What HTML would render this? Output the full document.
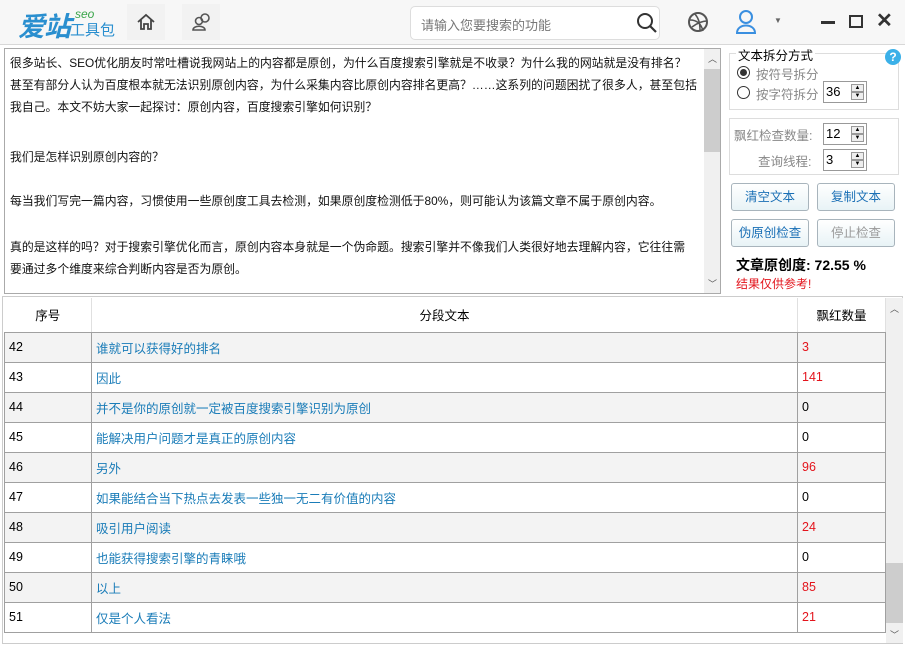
<!DOCTYPE html><html><head><meta charset="utf-8"><style>
*{margin:0;padding:0;box-sizing:border-box}
body{width:905px;height:647px;background:#fff;font-family:"Liberation Sans","Noto Sans CJK SC",sans-serif;font-size:12px;color:#000;position:relative;overflow:hidden}
.top{position:absolute;left:0;top:0;width:905px;height:45px;background:#f7f7f7;border-bottom:1px solid #d8d8d8}
.abs{position:absolute}
.ta{position:absolute;left:4px;top:48px;width:717px;height:246px;border:1px solid #aaa;background:#fff;overflow:hidden}
.ta p{position:absolute;left:5px;white-space:nowrap;font-size:11.85px;line-height:22px;color:#111}
.sb{position:absolute;right:0;top:0;width:16px;height:100%;background:#f0f0f0}
.btn{position:absolute;width:78px;height:28px;border:1px solid #a8b4bc;border-radius:3px;background:linear-gradient(#fff,#e8f3f6);color:#1a6fb5;font-size:12.5px;text-align:center;line-height:26px}
.spin{position:absolute;width:44px;height:22px;border:1px solid #999;background:#fff;font-size:13px;padding-left:2px;line-height:20px}
.spin i{position:absolute;right:2px;width:13px;height:8px;border:1px solid #999;background:#eee;font-style:normal;font-size:6px;line-height:7px;text-align:center}
table{position:absolute;left:4px;top:298px;border-collapse:collapse;width:882px;font-size:12.5px}
td{border:1px solid #a0a0a0;height:30px;padding-left:4px}
tr.g td{background:#f3f3f3}
td.t{color:#1a7cb8}
td.r{color:#e3141c}
th{font-weight:normal;height:34px;border-right:1px solid #e0e0e0;border-bottom:1px solid #a0a0a0}
</style></head><body>
<div class="top"></div>
<div class="abs" style="left:18px;top:5px;font-size:27px;color:#2a8fcf;font-style:italic;font-weight:bold;letter-spacing:-1px">爱站</div>
<div class="abs" style="left:75px;top:7px;font-size:12px;color:#3aa54a;font-style:italic">seo</div>
<div class="abs" style="left:70px;top:19px;font-size:15px;color:#2a8fcf">工具包</div>
<div class="abs" style="left:127px;top:4px;width:38px;height:36px;background:#f2f2f2"></div>
<svg class="abs" style="left:136px;top:12px" width="20" height="20" viewBox="0 0 20 20"><path d="M2 10 L10 3 L18 10 M5 8 V17 H8 V12 H12 V17 H15 V8" fill="none" stroke="#444" stroke-width="1.8"/></svg>
<div class="abs" style="left:182px;top:4px;width:38px;height:36px;background:#f2f2f2"></div>
<svg class="abs" style="left:191px;top:12px" width="22" height="20" viewBox="0 0 22 20"><circle cx="14" cy="6" r="4" fill="none" stroke="#555" stroke-width="1.6"/><circle cx="8" cy="9" r="3.5" fill="none" stroke="#555" stroke-width="1.6"/><path d="M2 18 C2 13 14 13 14 18 Z" fill="none" stroke="#555" stroke-width="1.6"/></svg>
<div class="abs" style="left:410px;top:6px;width:250px;height:34px;border:1px solid #ddd;border-radius:5px;background:#fff"></div>
<div class="abs" style="left:421px;top:15px;font-size:13px;color:#777">请输入您要搜索的功能</div>
<svg class="abs" style="left:636px;top:12px" width="22" height="22" viewBox="0 0 22 22"><circle cx="9" cy="9" r="7" fill="none" stroke="#333" stroke-width="2"/><path d="M14 14 L20 20" stroke="#333" stroke-width="2.2"/></svg>
<svg class="abs" style="left:687px;top:11px" width="24" height="24" viewBox="0 0 24 24"><circle cx="11" cy="11" r="9" fill="none" stroke="#555" stroke-width="2"/><path d="M3 9 C9 9 14 12 16 20 M8 3 C12 8 13 12 13 20 M5 16 C10 12 16 10 20 10" fill="none" stroke="#555" stroke-width="1.5"/></svg>
<svg class="abs" style="left:735px;top:9px" width="22" height="26" viewBox="0 0 22 26"><circle cx="11" cy="8" r="6" fill="none" stroke="#3a8fe0" stroke-width="2"/><path d="M2 24 C2 14 20 14 20 24 Z" fill="none" stroke="#3a8fe0" stroke-width="2"/></svg>
<div class="abs" style="left:774px;top:16px;font-size:8px;color:#666">▼</div>
<div class="abs" style="left:821px;top:21px;width:14px;height:3px;background:#333"></div>
<div class="abs" style="left:849px;top:15px;width:14px;height:13px;border:2.5px solid #333"></div>
<div class="abs" style="left:876px;top:8px;font-size:20px;font-weight:bold;color:#333">✕</div>

<div class="ta">
<p style="top:3px">很多站长、SEO优化朋友时常吐槽说我网站上的内容都是原创，为什么百度搜索引擎就是不收录？为什么我的网站就是没有排名？<br>甚至有部分人认为百度根本就无法识别原创内容，为什么采集内容比原创内容排名更高？……这系列的问题困扰了很多人，甚至包括<br>我自己。本文不妨大家一起探讨：原创内容，百度搜索引擎如何识别？</p>
<p style="top:97px">我们是怎样识别原创内容的？</p>
<p style="top:141px">每当我们写完一篇内容，习惯使用一些原创度工具去检测，如果原创度检测低于80%，则可能认为该篇文章不属于原创内容。</p>
<p style="top:187px">真的是这样的吗？对于搜索引擎优化而言，原创内容本身就是一个伪命题。搜索引擎并不像我们人类很好地去理解内容，它往往需<br>要通过多个维度来综合判断内容是否为原创。</p>
<div class="sb"><div style="position:absolute;top:20px;left:0;width:16px;height:83px;background:#cdcdcd"></div><div style="position:absolute;top:3px;left:4px;font-size:9px;color:#555">︿</div><div style="position:absolute;bottom:3px;left:4px;font-size:9px;color:#555">﹀</div></div>
</div>

<div class="abs" style="left:729px;top:53px;width:170px;height:57px;border:1px solid #ddd"></div>
<div class="abs" style="left:736px;top:45px;background:#fff;padding:0 2px;font-size:12.5px">文本拆分方式</div>
<div class="abs" style="left:885px;top:49px;width:16px;height:16px;border-radius:50%;background:#3bb0e8;color:#fff;font-weight:bold;font-size:12px;text-align:center;line-height:16px">?</div>
<div class="abs" style="left:737px;top:66px;width:13px;height:13px;border:1px solid #333;border-radius:50%"><div style="margin:2px;width:7px;height:7px;border-radius:50%;background:#333"></div></div>
<div class="abs" style="left:756px;top:64px;color:#888;font-size:12.5px">按符号拆分</div>
<div class="abs" style="left:737px;top:86px;width:13px;height:13px;border:1px solid #333;border-radius:50%"></div>
<div class="abs" style="left:756px;top:84px;color:#888;font-size:12.5px">按字符拆分</div>
<div class="spin" style="left:823px;top:81px">36<i style="top:2px">▲</i><i style="top:10px">▼</i></div>
<div class="abs" style="left:729px;top:118px;width:170px;height:57px;border:1px solid #ddd"></div>
<div class="abs" style="left:734px;top:125px;color:#888;font-size:12.5px">飘红检查数量:</div>
<div class="spin" style="left:823px;top:123px">12<i style="top:2px">▲</i><i style="top:10px">▼</i></div>
<div class="abs" style="left:758px;top:151px;color:#888;font-size:12.5px">查询线程:</div>
<div class="spin" style="left:823px;top:149px">3<i style="top:2px">▲</i><i style="top:10px">▼</i></div>
<div class="btn" style="left:731px;top:183px">清空文本</div>
<div class="btn" style="left:817px;top:183px">复制文本</div>
<div class="btn" style="left:731px;top:219px">伪原创检查</div>
<div class="btn" style="left:817px;top:219px;color:#999">停止检查</div>
<div class="abs" style="left:736px;top:255px;font-size:14px;font-weight:bold">文章原创度: 72.55 %</div>
<div class="abs" style="left:736px;top:275px;font-size:12px;color:#e3141c">结果仅供参考!</div>

<div class="abs" style="left:2px;top:296px;width:901px;height:348px;border:1px solid #ccc"></div>
<table>
<tr><th style="width:87px">序号</th><th>分段文本</th><th style="width:88px">飘红数量</th></tr>
<tr class="g"><td>42</td><td class="t">谁就可以获得好的排名</td><td class="r">3</td></tr>
<tr><td>43</td><td class="t">因此</td><td class="r">141</td></tr>
<tr class="g"><td>44</td><td class="t">并不是你的原创就一定被百度搜索引擎识别为原创</td><td>0</td></tr>
<tr><td>45</td><td class="t">能解决用户问题才是真正的原创内容</td><td>0</td></tr>
<tr class="g"><td>46</td><td class="t">另外</td><td class="r">96</td></tr>
<tr><td>47</td><td class="t">如果能结合当下热点去发表一些独一无二有价值的内容</td><td>0</td></tr>
<tr class="g"><td>48</td><td class="t">吸引用户阅读</td><td class="r">24</td></tr>
<tr><td>49</td><td class="t">也能获得搜索引擎的青睐哦</td><td>0</td></tr>
<tr class="g"><td>50</td><td class="t">以上</td><td class="r">85</td></tr>
<tr><td>51</td><td class="t">仅是个人看法</td><td class="r">21</td></tr>
</table>
<div class="abs" style="left:886px;top:298px;width:17px;height:345px;background:#f0f0f0"><div style="position:absolute;top:4px;left:4px;font-size:9px;color:#555">︿</div><div style="position:absolute;top:265px;left:0;width:17px;height:60px;background:#cdcdcd"></div><div style="position:absolute;bottom:2px;left:4px;font-size:9px;color:#555">﹀</div></div>
</body></html>
